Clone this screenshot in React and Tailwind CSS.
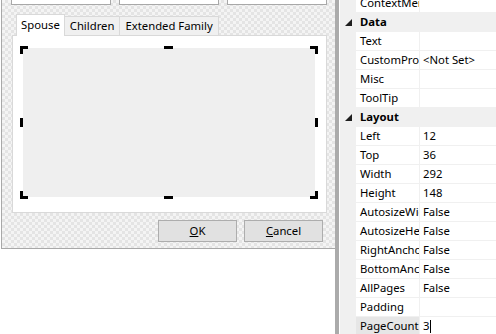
const checker =
  "bg-[conic-gradient(#e4e4e4_25%,#f4f4f4_0_50%,#e4e4e4_0_75%,#f4f4f4_0)] bg-size-[6px_6px]";

function Handle({ className }) {
  return <div className={`absolute bg-black ${className}`} />;
}

function PropRow({ name, value, selected, cursor }) {
  return (
    <div className="flex h-[19px] border-b border-[#f0f0f0]">
      <div className="w-[16px] shrink-0 bg-[#f0f0f0]" />
      <div
        className={`w-[63px] shrink-0 overflow-hidden whitespace-nowrap pl-[4px] leading-[18px] ${
          selected ? "bg-[#e6e6e6]" : "bg-white"
        }`}
      >
        {name}
      </div>
      <div className="w-[1px] shrink-0 bg-[#f0f0f0]" />
      <div className="flex-1 overflow-hidden whitespace-nowrap pl-[3px] leading-[18px]">
        {value}
        {cursor && <span className="inline-block w-[1px] h-[13px] bg-black align-middle ml-[1px]" />}
      </div>
    </div>
  );
}

function Category({ name }) {
  return (
    <div className="flex h-[19px] items-center bg-[#f0f0f0] border-b border-[#f0f0f0]">
      <div className="w-[16px] shrink-0 flex justify-center">
        <svg width="7" height="7" viewBox="0 0 7 7">
          <polygon points="7,0 7,7 0,7" fill="#1e1e1e" />
        </svg>
      </div>
      <div className="pl-[4px] font-bold leading-[18px]">{name}</div>
    </div>
  );
}

export default function App() {
  const rows1 = [
    ["Text", ""],
    ["CustomProperties", "<Not Set>"],
    ["Misc", ""],
    ["ToolTip", ""],
  ];
  const rows2 = [
    ["Left", "12"],
    ["Top", "36"],
    ["Width", "292"],
    ["Height", "148"],
    ["AutosizeWidth", "False"],
    ["AutosizeHeight", "False"],
    ["RightAnchor", "False"],
    ["BottomAnchor", "False"],
    ["AllPages", "False"],
    ["Padding", ""],
  ];

  return (
    <div
      className="w-[496px] h-[334px] flex bg-white overflow-hidden text-[11.3px] text-black"
      style={{ fontFamily: '"Noto Sans", "Open Sans", sans-serif' }}
    >
      {/* designer surface */}
      <div className="w-[335px] shrink-0 flex flex-col">
        <div className={`h-[249px] ml-[1px] border-b border-l border-[#a8a8a8] ${checker} flex flex-col`}>
          <div className="flex h-[5px] gap-[8px] pl-[9px]">
            <div className="w-[100px] bg-white border-x border-b border-[#a8a8a8]" />
            <div className="w-[100px] bg-white border-x border-b border-[#a8a8a8]" />
            <div className="w-[100px] bg-white border-x border-b border-[#a8a8a8]" />
          </div>

          {/* tab control */}
          <div className="ml-[10px] mt-[8px] w-[315px] flex flex-col">
            <div className="flex items-end h-[22px] pl-[4px]">
              <div className="h-[22px] px-[4px] bg-white border-x border-t border-[#d9d9d9] leading-[20px] -mb-[1px] relative z-10">
                Spouse
              </div>
              <div className="h-[19px] px-[5px] bg-[#f0f0f0] border-r border-t border-[#d9d9d9] leading-[18px]">
                Children
              </div>
              <div className="h-[19px] px-[5px] bg-[#f0f0f0] border-r border-t border-[#d9d9d9] leading-[18px]">
                Extended Family
              </div>
            </div>
            <div className="h-[178px] bg-white border border-[#d9d9d9] pl-[10px] pt-[12px]">
              <div className="relative w-[292px] h-[149px] bg-[#efefef]">
                {/* corners */}
                <Handle className="-left-[3px] -top-[2px] w-[8px] h-[3px]" />
                <Handle className="-left-[3px] -top-[2px] w-[3px] h-[8px]" />
                <Handle className="-right-[3px] -top-[2px] w-[8px] h-[3px]" />
                <Handle className="-right-[3px] -top-[2px] w-[3px] h-[8px]" />
                <Handle className="-left-[3px] -bottom-[2px] w-[8px] h-[3px]" />
                <Handle className="-left-[3px] -bottom-[2px] w-[3px] h-[8px]" />
                <Handle className="-right-[3px] -bottom-[2px] w-[8px] h-[3px]" />
                <Handle className="-right-[3px] -bottom-[2px] w-[3px] h-[8px]" />
                {/* mids */}
                <Handle className="left-[141px] -top-[2px] w-[9px] h-[3px]" />
                <Handle className="left-[141px] -bottom-[2px] w-[9px] h-[3px]" />
                <Handle className="-left-[3px] top-[70px] w-[3px] h-[9px]" />
                <Handle className="-right-[3px] top-[70px] w-[3px] h-[9px]" />
              </div>
            </div>
          </div>

          <div className="flex justify-end gap-[7px] pr-[12px] mt-[7px]">
            <button className="w-[79px] h-[22px] bg-[#e1e1e1] border border-[#adadad] leading-[20px]">
              <span className="underline">O</span>K
            </button>
            <button className="w-[79px] h-[22px] bg-[#e1e1e1] border border-[#adadad] leading-[20px]">
              <span className="underline">C</span>ancel
            </button>
          </div>
        </div>
      </div>

      {/* splitter */}
      <div className="w-[4px] shrink-0 bg-[#ababab]" />
      <div className="w-[1px] shrink-0 bg-white" />

      {/* property grid */}
      <div className="flex-1 flex flex-col -mt-[6px]">
        <PropRow name="ContextMenu" value="" />
        <Category name="Data" />
        {rows1.map(([n, v]) => (
          <PropRow key={n} name={n} value={v} />
        ))}
        <Category name="Layout" />
        {rows2.map(([n, v]) => (
          <PropRow key={n} name={n} value={v} />
        ))}
        <PropRow name="PageCount" value="3" selected cursor />
      </div>
    </div>
  );
}
